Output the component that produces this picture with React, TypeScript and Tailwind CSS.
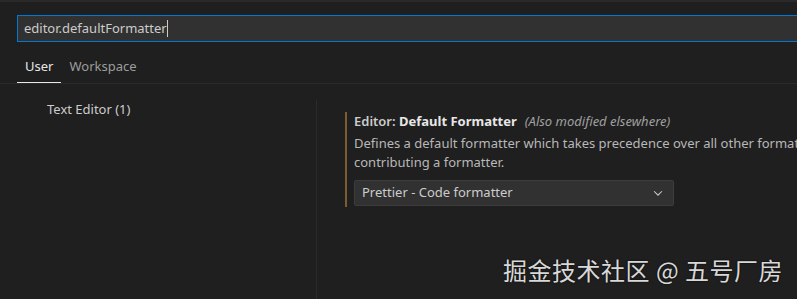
import React from "react";

const font = { fontFamily: '"Noto Sans", "Open Sans", sans-serif' };

export default function App() {
  return (
    <div
      className="w-[797px] h-[299px] overflow-hidden bg-[#1f1f1f] text-[#cccccc] relative border-t-2 border-[#2a2a2a]"
      style={font}
    >
      <div className="pt-[13px] pl-[17px]">
        <div className="w-[900px] h-[27px] bg-[#313131] border border-[#0078d4] flex items-center pl-[6px] text-[13px] text-[#cccccc]">
          <span>editor.defaultFormatter</span>
          <span className="w-px h-[17px] bg-[#cccccc]"></span>
        </div>
      </div>
      <div className="pl-[17px] border-b border-[#2b2b2b] h-[42px] flex items-end">
        <div className="flex text-[13px]">
          <div className="px-[8px] pb-[6px] border-b border-[#e7e7e7] text-[#e7e7e7]">User</div>
          <div className="px-[8px] pb-[6px] text-[#9d9d9d]">Workspace</div>
        </div>
      </div>
      <div className="flex h-[216px]">
        <div className="w-[316px] shrink-0 pt-[16px] pl-[47px] text-[13px]">
          <div className="h-[19px] leading-[19px] text-[#cccccc] whitespace-nowrap">Text Editor (1)</div>
        </div>
        <div className="flex-1 min-w-0 mt-[16px] border-l border-[#2b2b2b] pl-[28px] pt-[12px]">
          <div className="w-[800px] border-l-2 border-[#7a5e2e] pl-[7px] pb-[1px]">
            <div className="text-[13px] leading-[18px] whitespace-nowrap">
              <span className="font-semibold text-[#cccccc]">Editor: </span>
              <span className="font-bold text-[#e7e7e7]">Default Formatter</span>
              <span className="italic text-[#a0a0a0] ml-[8px]">(Also modified elsewhere)</span>
            </div>
            <div className="text-[13px] leading-[19px] text-[#b8b8b8] mt-[4px] whitespace-nowrap">
              Defines a default formatter which takes precedence over all other formatter settings. Must be the identifier of an extension
              <br />
              contributing a formatter.
            </div>
            <div className="mt-[8px] w-[320px] h-[26px] bg-[#313131] border border-[#3c3c3c] rounded-[2px] flex items-center justify-between pl-[7px] pr-[8px] text-[13px] text-[#cccccc]">
              <span>Prettier - Code formatter</span>
              <svg width="14" height="14" viewBox="0 0 16 16" fill="none" stroke="#cccccc" strokeWidth="1.2">
                <path d="M3.5 6 L8 10.5 L12.5 6" />
              </svg>
            </div>
          </div>
        </div>
      </div>
      <div
        className="absolute right-[14px] top-[253px] text-[24px] leading-[30px] text-[#d8d8d8] tracking-[0.5px] whitespace-nowrap"
        style={{ fontFamily: '"Noto Sans CJK SC", "Noto Sans", sans-serif', textShadow: "0 0 2px rgba(0,0,0,0.8)" }}
      >
        掘金技术社区 @ 五号厂房
      </div>
    </div>
  );
}
